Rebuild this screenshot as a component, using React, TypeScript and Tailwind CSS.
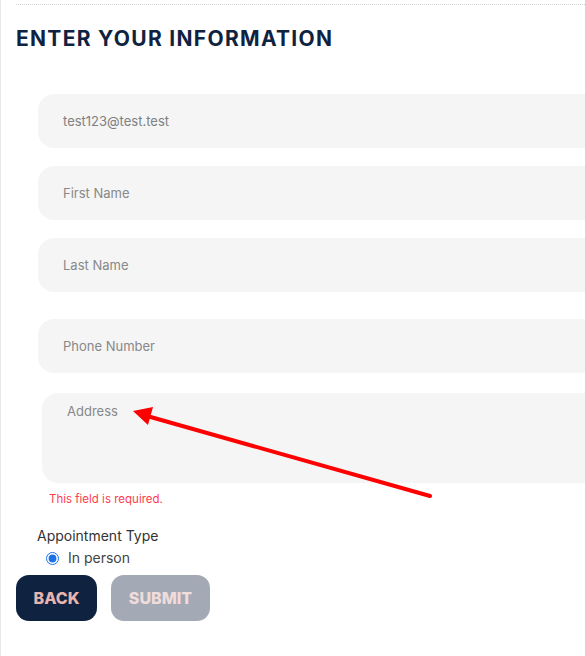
const fieldCls =
  "block h-[54px] w-[580px] rounded-2xl bg-[#f5f5f5] px-[25px] text-[13px] text-[#808080] outline-none placeholder:text-[#888]";

const App = () => {
  return (
    <div
      className="relative h-[656px] w-full overflow-hidden border-l border-[#e8e8e8] bg-white"
      style={{ fontFamily: "Inter, 'Open Sans', sans-serif" }}
    >
      <div className="ml-[15px] mt-[4px] border-t border-dotted border-[#d4d4d4]" />
      <h1 className="ml-[15px] mt-[20px] text-[21px] font-bold leading-[28px] tracking-[1.3px] text-[#0f2341]">
        ENTER YOUR INFORMATION
      </h1>

      <div className="ml-[37px] mt-[41px] flex flex-col">
        <input className={fieldCls} defaultValue="test123@test.test" />
        <input className={`${fieldCls} mt-[18px]`} placeholder="First Name" />
        <input className={`${fieldCls} mt-[18px]`} placeholder="Last Name" />
        <input className={`${fieldCls} mt-[27px]`} placeholder="Phone Number" />
        <textarea
          className="ml-[4px] mt-[20px] block h-[90px] w-[580px] resize-none rounded-2xl bg-[#f5f5f5] px-[25px] py-[9px] text-[13px] text-[#777] outline-none placeholder:text-[#888]"
          placeholder="Address"
        />
        <p className="ml-[11px] mt-[9px] text-[11.5px] leading-[14px] text-[#ff3b4e]">
          This field is required.
        </p>
      </div>

      <div className="ml-[36px] mt-[21px] text-[14px] leading-[18px] text-[#333]">
        Appointment Type
      </div>
      <label className="ml-[45px] mt-[4px] flex items-center gap-[9px] text-[14px] leading-[18px] text-[#444]">
        <input type="radio" defaultChecked className="h-[13px] w-[13px] accent-[#1a73e8]" />
        In person
      </label>

      <div className="ml-[15px] mt-[8px] flex gap-[14px]">
        <button
          type="button"
          className="h-[46px] w-[81px] rounded-[13px] bg-[#0f2341] text-[16px] font-extrabold text-[#e8b4ad]"
        >
          BACK
        </button>
        <button
          type="button"
          className="h-[46px] w-[99px] rounded-[13px] bg-[#a3aab5] text-[16px] font-extrabold text-[#f1dcdc]"
        >
          SUBMIT
        </button>
      </div>

      <svg
        className="pointer-events-none absolute left-0 top-0"
        width="585"
        height="656"
        viewBox="0 0 585 656"
      >
        <line x1="429" y1="496" x2="146" y2="416" stroke="#ff0000" strokeWidth="4" strokeLinecap="round" />
        <polygon points="132,411 152,407 147,425" fill="#ff0000" />
      </svg>
    </div>
  );
};

export default App;
